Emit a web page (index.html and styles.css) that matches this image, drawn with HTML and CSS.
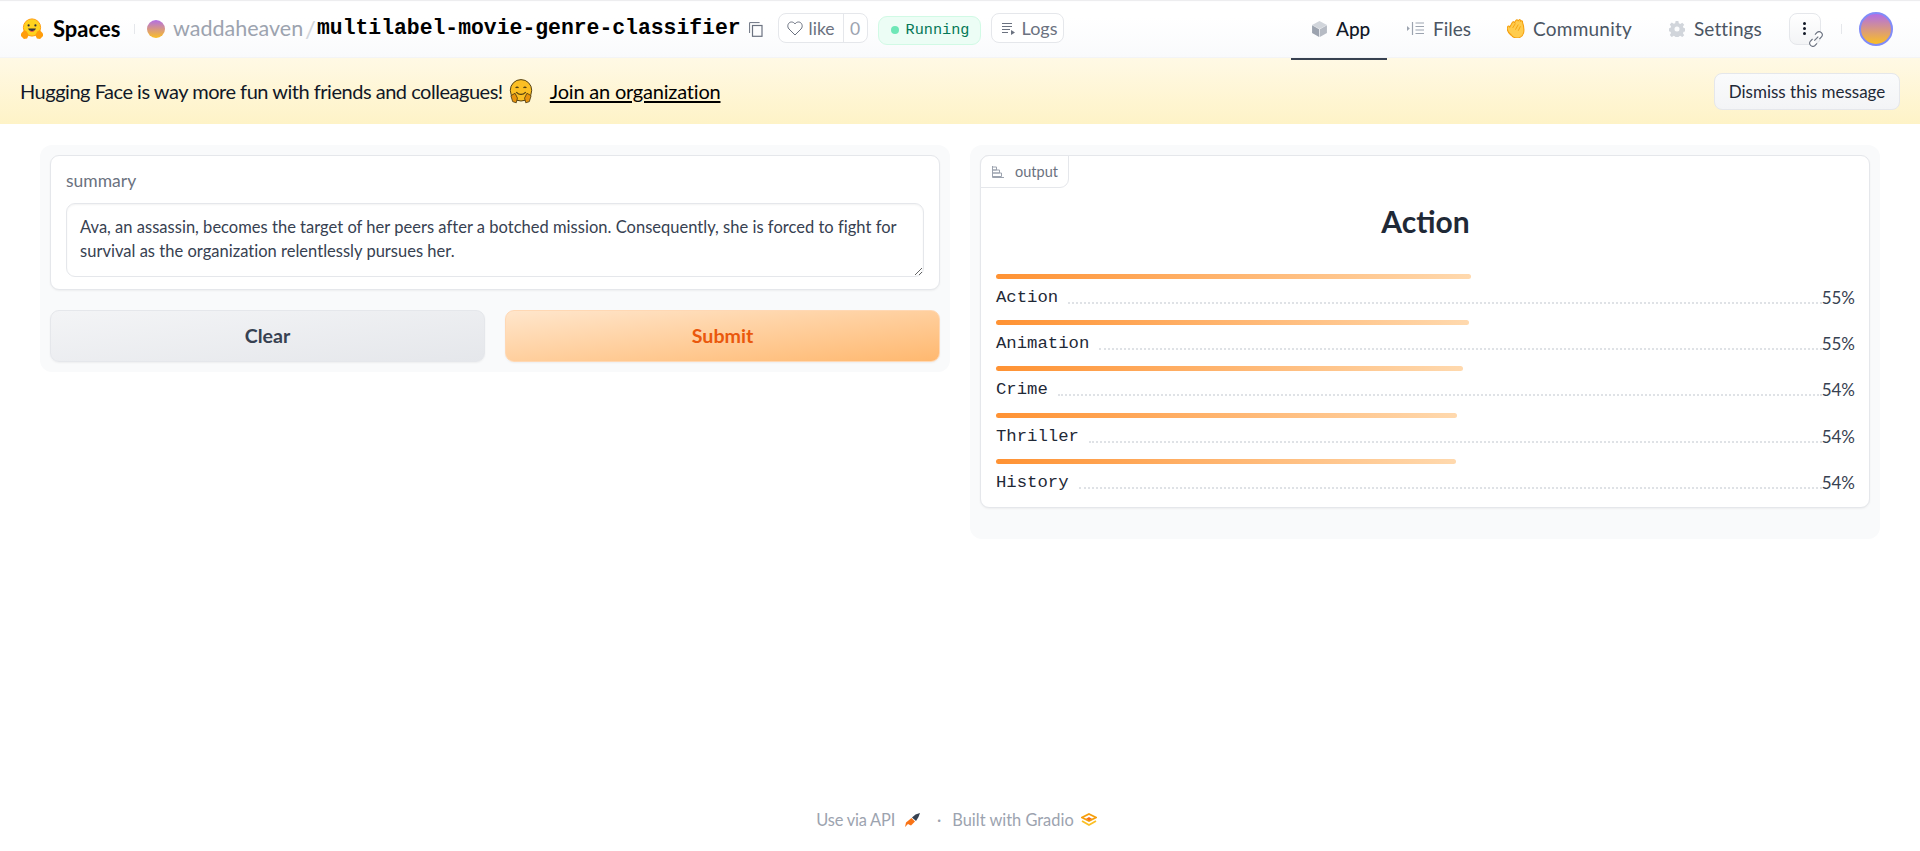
FILE: index.html
```html
<!DOCTYPE html>
<html lang="en">
<head>
<meta charset="utf-8">
<title>Multilabel Movie Genre Classifier</title>
<link rel="stylesheet" href="styles.css">
</head>
<body>
<header class="topbar">
  <div class="brand">
    <svg class="hf-logo" viewBox="0 0 24 22"><circle cx="12" cy="9.500" r="8.600" fill="#ffd21e"/><circle cx="12" cy="9.500" r="8.600" fill="none" stroke="#ff9d0b" stroke-width="1"/><circle cx="8.600" cy="7.400" r="1.100" fill="#32343d"/><circle cx="15.400" cy="7.400" r="1.100" fill="#32343d"/><path d="M8 10.600c1 3.400 7 3.400 8 0z" fill="#32343d"/><path d="M9.800 12.300c1.300 1 3.100 1 4.400 0l-.6 1.500h-3.200z" fill="#ef4e4e"/><path d="M1 15.500 4.400 12l2.300 1.600 2 3.400-1.600 3.400-3.200.6L1 18z" fill="#ff9d0b"/><path d="M23 15.500 19.600 12l-2.300 1.600-2 3.400 1.600 3.400 3.200.6L23 18z" fill="#ff9d0b"/></svg>
    <span class="brand-name">Spaces</span>
    <span class="brand-sep"></span>
    <span class="owner-dot"></span>
    <span class="owner">waddaheaven</span>
    <span class="slash">/</span>
    <span class="repo">multilabel-movie-genre-classifier</span>
    <svg class="copy" viewBox="0 0 14 15"><path d="M.6 11V.6h10" fill="none" stroke="#6b7280" stroke-width="1"/><rect x="3.500" y="3.500" width="9.500" height="10.800" fill="none" stroke="#6b7280" stroke-width="1.200"/></svg>
    <div class="like">
      <span class="like-main"><svg class="heart" viewBox="0 0 16 15"><path d="M8 14 2 8C-.4 5.600 1 1 4.500 1 6 1 7.300 1.800 8 3c.7-1.200 2-2 3.500-2C15 1 16.400 5.600 14 8z" fill="none" stroke="#6b7280" stroke-width="1"/></svg>like</span>
      <span class="like-count">0</span>
    </div>
    <div class="running"><span class="run-dot"></span>Running</div>
    <div class="logs"><svg class="logs-icon" viewBox="0 0 13 13"><path d="M0 1.500h10M0 4.500h10M0 7.500h8M0 10.500h6" stroke="#6b7280" stroke-width="1.200"/><path d="M9 8l4 2.500L9 13z" fill="#6b7280"/></svg>Logs</div>
  </div>
  <nav class="tabs">
    <a class="tab tab-app"><svg class="tab-icon cube" viewBox="0 0 13 14"><path d="M6.500 0 13 3.400 6.500 7 0 3.400z" fill="#d1d5db"/><path d="M0 3.800 6.200 7.300V14L0 10.500z" fill="#9ca3af"/><path d="M13 3.800 6.800 7.300V14L13 10.500z" fill="#b6bbc4"/></svg>App</a>
    <a class="tab tab-files"><svg class="tab-icon files" viewBox="0 0 17 13"><path d="M0 4 2.800 6.500 0 9z" fill="#9ca3af"/><path d="M5.500 0v13M8.500 1h8.500M8.500 4.500h8.500M8.500 8h8.500M8.500 11.500h8.500" stroke="#9ca3af" stroke-width="1.200"/></svg>Files</a>
    <a class="tab tab-comm"><svg class="tab-icon clap" viewBox="0 0 16 17"><path d="M3 14C.5 11.500-.3 9 .5 7c.6-1.300 1.700-.8 2 .2L4.800 2.900c.6-1 1.900-.4 1.700.7L8 1.200c.7-1 2-.4 1.700.7l.9-1c.8-.8 1.900 0 1.500 1l.6-.3c.9-.2 1.300.6 1.100 1.300 1.200 3.500 1.800 6.500 1 9.500-.8 3-3 4.600-6 4.600-2.300 0-4.200-.9-5.800-3.900z" fill="#ffcc4d" stroke="#f59e0b" stroke-width=".9"/><path d="M5 8 7.500 4M7.500 9.500 10 5M10 10.500l2-4" stroke="#f59e0b" stroke-width=".8"/></svg>Community</a>
    <a class="tab tab-set"><svg class="tab-icon gear" viewBox="0 0 14 14"><path d="M5.800 0h2.400l.4 2 1.300.6 1.700-1.100 1.700 1.700-1.100 1.700.6 1.300 2 .4v2.400l-2 .4-.6 1.300 1.100 1.700-1.700 1.700-1.700-1.100-1.300.6-.4 2H5.800l-.4-2-1.300-.6-1.700 1.100L.7 12.300l1.100-1.700-.6-1.300-2-.4V6.500l2-.4.6-1.300L.7 3.100l1.700-1.700 1.700 1.100 1.300-.6z" fill="#d1d5db"/><circle cx="7" cy="7" r="2.200" fill="#fbfcfd"/></svg>Settings</a>
  </nav>
  <div class="more">
    <span class="dots"><i></i><i></i><i></i></span>
    <svg class="link-badge" viewBox="0 0 14 14"><path d="M5.500 8.500 9 5M4 7 2 9a2.800 2.800 0 0 0 3.900 3.900l2-2M10 7l2-2A2.800 2.800 0 0 0 8.100 1.100l-2 2" fill="#fff" stroke="#6b7280" stroke-width="1"/></svg>
  </div>
  <span class="user-sep"></span>
  <span class="user-avatar"></span>
</header>

<section class="banner">
  <span class="banner-text">Hugging Face is way more fun with friends and colleagues!</span>
  <svg class="banner-emoji" viewBox="0 0 20 21"><circle cx="10" cy="9.500" r="9" fill="#fbbf24" stroke="#4b3a12" stroke-width=".8"/><path d="M5.500 7.500q1.200-1.500 2.400 0M12.100 7.500q1.200-1.500 2.400 0M6 11q4 4 8 0" fill="none" stroke="#4b3a12" stroke-width="1"/><path d="M1.500 14 5 12l2 4-1 4-3-1zM18.500 14 15 12l-2 4 1 4 3-1z" fill="#e8930c" stroke="#4b3a12" stroke-width=".7"/></svg>
  <a class="banner-link">Join an organization</a>
  <button class="dismiss">Dismiss this message</button>
</section>

<main class="app">
  <section class="panel panel-input">
    <div class="card input-card">
      <label class="field-label" for="summary">summary</label>
      <textarea class="summary" id="summary">Ava, an assassin, becomes the target of her peers after a botched mission. Consequently, she is forced to fight for survival as the organization relentlessly pursues her.</textarea>
    </div>
    <div class="actions">
      <button class="btn btn-clear">Clear</button>
      <button class="btn btn-submit">Submit</button>
    </div>
  </section>
  <section class="panel panel-output">
    <div class="card output-card">
      <div class="output-tab"><svg class="output-icon" viewBox="0 0 12 12"><path d="M.5 0v11.500H12M.5 1h4v3h-4M.5 4h7v3h-7M.5 7h9v3.500h-9" fill="none" stroke="#9ca3af" stroke-width="1"/></svg>output</div>
      <h2 class="result-title">Action</h2>
      <div class="results">
        <div class="result"><div class="bar" style="width:475px"></div><div class="line"><span class="genre">Action</span><span class="leader"></span><span class="pct">55%</span></div></div>
        <div class="result"><div class="bar" style="width:473px"></div><div class="line"><span class="genre">Animation</span><span class="leader"></span><span class="pct">55%</span></div></div>
        <div class="result"><div class="bar" style="width:467px"></div><div class="line"><span class="genre">Crime</span><span class="leader"></span><span class="pct">54%</span></div></div>
        <div class="result"><div class="bar" style="width:461px"></div><div class="line"><span class="genre">Thriller</span><span class="leader"></span><span class="pct">54%</span></div></div>
        <div class="result"><div class="bar" style="width:460px"></div><div class="line"><span class="genre">History</span><span class="leader"></span><span class="pct">54%</span></div></div>
      </div>
    </div>
  </section>
</main>

<footer class="foot">
  <span class="foot-api">Use via API</span>
  <svg class="rocket" viewBox="0 0 15 14"><path d="M15 0l-1.500 4-2.500 4-4-3.500 3.500-3z" fill="#374151"/><path d="M6.500 5 10 8.500 6 12.500 3 11 0 14l1-4.500z" fill="#f97316"/></svg>
  <span class="foot-dot">·</span>
  <span>Built with Gradio</span>
  <svg class="gradio" viewBox="0 0 16 14"><path d="M8 1 15 4.500 8 8 1 4.500z" fill="none" stroke="#f59e0b" stroke-width="1.800"/><path d="M1 8 8 12l7-4" fill="none" stroke="#fbbf24" stroke-width="1.800"/><path d="M5 5.800 8 4l3 1.800L8 7.500z" fill="#f97316"/></svg>
</footer>
</body>
</html>
```
FILE: styles.css
```css
* { box-sizing: border-box; }
html, body { height: 100%; }
body {
  margin: 0;
  height: 851px;
  overflow: hidden;
  display: flex;
  flex-direction: column;
  font-family: "Lato", "Noto Sans", sans-serif;
  color: #374151;
  background: #fff;
}
.topbar {
  height: 58px;
  flex: none;
  display: flex;
  align-items: center;
  padding: 0 27px 0 20px;
  background: linear-gradient(#fff 30%, #f9fafc);
  box-shadow: inset 0 2px 1px -1px #ececee, inset 0 -1px #f3f4f6;
  position: relative;
}
.brand { display: flex; align-items: center; }
.hf-logo { width: 24px; height: 22px; }
.brand-name { font-size: 22px; font-weight: 700; color: #000; margin-left: 9px; width: 68px; margin-top: -2px; }
.brand-sep { width: 1px; height: 10px; background: #e5e7eb; margin: 0 12px 0 13px; }
.owner-dot { width: 18px; height: 18px; border-radius: 50%; background: linear-gradient(#b26ee6, #fbbf24); }
.owner { font-size: 21.500px; color: #9ca3af; margin-left: 8px; width: 131px; white-space: nowrap; margin-top: -2px; }
.slash { font-size: 24px; color: #d1d5db; width: 13px; text-align: center; margin-top: -2px; }
.repo { font-family: "Liberation Mono", monospace; font-weight: 700; font-size: 21.400px; color: #000; margin-top: -2px; }
.copy { width: 14px; height: 15px; margin-left: 8px; }
.like {
  margin-left: 15px; height: 30px; width: 90px; display: flex; align-items: center; margin-bottom: 2px;
  border: 1px solid #e5e7eb; border-radius: 8px; background: #fff; font-size: 17.500px; color: #6b7280;
}
.like-main { width: 65px; height: 100%; display: flex; align-items: center; padding-left: 8px; border-right: 1px solid #e5e7eb; color: #6b7280; }
.heart { width: 16px; height: 15px; margin-right: 6px; flex: none; }
.like-count { flex: 1; text-align: center; color: #9ca3af; }
.running {
  margin-left: 10px; height: 29px; width: 103px; display: flex; align-items: center; padding-left: 12px; margin-top: 2px;
  border: 1px solid #d1fae5; border-radius: 9px; background: #ecfdf5; color: #047857;
  font-family: "Liberation Mono", monospace; font-size: 15.200px;
}
.run-dot { width: 8px; height: 8px; border-radius: 50%; background: #6ee7b7; margin-right: 7px; flex: none; }
.logs {
  margin-left: 10px; height: 30px; width: 73px; display: flex; align-items: center; padding-left: 10px; margin-bottom: 2px;
  border: 1px solid #e5e7eb; border-radius: 8px; background: #fff; font-size: 18px; color: #6b7280;
}
.logs-icon { width: 13px; height: 13px; margin-right: 7px; flex: none; }
.tabs { display: flex; align-self: flex-start; height: 60px; margin-left: auto; }
.tab { display: flex; align-items: center; font-size: 19px; color: #4b5563; height: 60px; padding: 0 0 3px 20px; white-space: nowrap; }
.tab-app { width: 96px; color: #111827; font-weight: 500; border-bottom: 2px solid #374151; padding-bottom: 1px; padding-left: 21px; }
.tab-files { width: 100px; }
.tab-comm { width: 163px; padding-left: 20px; letter-spacing: .25px; }
.tab-set { width: 132px; padding-left: 19px; letter-spacing: .1px; }
.tab-icon { flex: none; margin-right: 9px; }
.cube { width: 15px; height: 16px; }
.files { width: 17px; height: 13px; }
.clap { width: 18px; height: 19px; margin-right: 8px; }
.gear { width: 16px; height: 16px; }
.more {
  margin-left: 7px; width: 32px; height: 32px; position: relative; display: flex; align-items: center; justify-content: center; flex: none;
  border: 1px solid #e5e7eb; border-radius: 8px; background: linear-gradient(#fff, #f3f4f6);
}
.dots { display: flex; flex-direction: column; gap: 2px; margin-right: 2px; margin-top: -2px; }
.dots i { width: 3px; height: 3px; background: #111827; border-radius: 50%; display: block; }
.link-badge { position: absolute; right: -4px; bottom: -3px; width: 16px; height: 16px; }
.user-sep { width: 1px; height: 10px; background: #e5e7eb; margin: 0 17px 0 20px; flex: none; }
.user-avatar { width: 34px; height: 34px; border-radius: 50%; background: linear-gradient(#b26ee6, #fbbf24); border: 2px solid #818cf8; flex: none; }
.banner {
  height: 66px; flex: none; display: flex; align-items: center; padding: 0 20px 0 20px;
  background: linear-gradient(#fff9e5, #fef3c7);
  color: #111827; font-size: 20px;
}
.banner-text { white-space: nowrap; letter-spacing: -.48px; }
.banner-emoji { width: 24px; height: 25px; margin-left: 6px; flex: none; }
.banner-link { margin-left: 17px; color: #000; text-decoration: underline; letter-spacing: -.2px; text-underline-offset: 2px; }
.dismiss {
  margin-left: auto; width: 186px; height: 37px; padding: 0;
  border: 1px solid #e5e7eb; border-radius: 8px; background: linear-gradient(#fafbfc, #f3f4f6);
  font: 17px "Lato", sans-serif; color: #1f2937;
}
.app { flex: 1; display: grid; grid-template-columns: 1fr 1fr; gap: 20px; padding: 21px 40px 0; align-items: start; }
.panel { background: #f9fafb; border-radius: 12px; padding: 10px; }
.card { background: #fff; border: 1px solid #e5e7eb; border-radius: 9px; box-shadow: 0 1px 2px rgba(0,0,0,.05); }
.input-card { padding: 14px 15px 12px; height: 135px; }
.field-label { display: block; font-size: 17.500px; color: #6b7280; height: 33px; line-height: 22px; }
.summary {
  display: block; width: 100%; height: 74px; padding: 11px 13px; resize: both; outline: none;
  border: 1px solid #e5e7eb; border-radius: 9px; background: #fff; box-shadow: inset 0 1px 2px rgba(0,0,0,.05);
  font: 16.500px/24px "Lato", sans-serif; letter-spacing: .02px; color: #374151; overflow: hidden;
}
.actions { display: grid; grid-template-columns: 1fr 1fr; gap: 20px; margin-top: 20px; }
.btn { height: 52px; border-radius: 9px; font: 700 19.600px "Lato", sans-serif; padding: 0 0 2px; box-shadow: 0 1px 2px rgba(0,0,0,.05); }
.btn-clear { border: 1px solid #e5e7eb; background: linear-gradient(to bottom right, #f3f4f6, #e5e7eb); color: #374151; }
.btn-submit { border: 1px solid #ffd8b4; background: linear-gradient(to bottom right, #ffe6cc, #ffb86f); color: #ea580c; }
.panel-output { padding-bottom: 31px; }
.output-card { height: 353px; padding: 0 14px 0 15px; position: relative; }
.output-tab {
  position: absolute; left: -1px; top: -1px; width: 89px; height: 33px; display: flex; align-items: center; padding-left: 11px;
  background: #fff; border: 1px solid #e5e7eb; border-radius: 9px 0 9px 0; font-size: 14.500px; color: #6b7280;
}
.output-icon { width: 12px; height: 12px; margin-right: 11px; }
.result-title { margin: 0; padding-top: 45px; height: 118px; text-align: center; font-size: 30px; line-height: 40px; font-weight: 700; color: #1f2937; }
.result { height: 46.200px; }
.bar { height: 5px; border-radius: 3px; background: linear-gradient(to right, #ff9233, #ffd9ae); }
.line { display: flex; align-items: flex-end; height: 29px; }
.genre { font-family: "Liberation Mono", monospace; font-size: 17.300px; line-height: 22px; color: #1f2937; margin-bottom: -1px; }
.leader { flex: 1; border-bottom: 2px dotted #dfe2e6; margin: 0 0 4px 10px; }
.pct { font-size: 17px; font-weight: 400; color: #374151; line-height: 24px; margin-bottom: -2px; }
.foot { height: 51px; flex: none; display: flex; align-items: center; justify-content: center; padding: 0 7px 12px 0; font-size: 16.400px; color: #9ca3af; }
.foot-api { letter-spacing: -.2px; }
.rocket { width: 15px; height: 14px; margin-left: 10px; }
.foot-dot { margin: 0 11px 0 17px; }
.gradio { width: 16px; height: 14px; margin-left: 7px; }
```
